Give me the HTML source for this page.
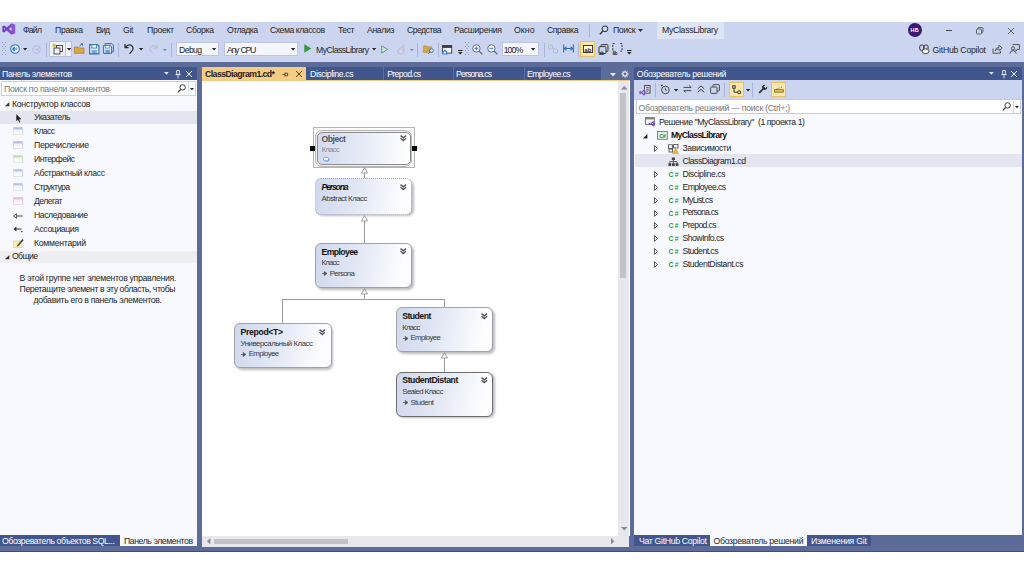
<!DOCTYPE html>
<html lang="ru"><head><meta charset="utf-8"><title>MyClassLibrary - ClassDiagram1.cd</title>
<style>
html,body{margin:0;padding:0;background:#fff;}
body{width:1024px;height:574px;position:relative;overflow:hidden;font-family:"Liberation Sans", sans-serif;}
#app{position:absolute;left:0;top:0;width:1024px;height:574px;}
#app div,#app span,#app svg{position:absolute;}
.t{white-space:pre;display:block;}
svg{overflow:visible;}
</style></head><body><div id="app">
<div style="left:0px;top:22px;width:1024px;height:529.6px;background:#5d6b99;"></div>
<div style="left:0px;top:550.6px;width:1024px;height:1px;background:#3b4d86;"></div>
<div style="left:0px;top:22px;width:1024px;height:39.5px;background:#ccd5f0;"></div>
<div style="left:0px;top:67px;width:197px;height:13px;background:#40568d;"></div>
<div style="left:0px;top:80px;width:197px;height:454.6px;background:#f7f9fe;"></div>
<div style="left:0px;top:534.6px;width:197px;height:11.8px;background:#40568d;"></div>
<div style="left:202px;top:67px;width:399px;height:13px;background:#40568d;"></div>
<div style="left:202px;top:67px;width:104px;height:13px;background:#f5cc84;"></div>
<div style="left:202px;top:79.5px;width:427.5px;height:1.5px;background:#f5cc84;"></div>
<div style="left:202px;top:81px;width:427.5px;height:455px;background:#ffffff;"></div>
<div style="left:634.2px;top:67px;width:387.5px;height:13px;background:#40568d;"></div>
<div style="left:634.2px;top:80px;width:387.5px;height:20px;background:#ccd5f0;"></div>
<div style="left:634.2px;top:100px;width:387.5px;height:434.6px;background:#f7f9fe;"></div>
<div style="left:634.2px;top:534.6px;width:236.5px;height:11.8px;background:#40568d;"></div>
<svg style="left:2px;top:23.4px;" width="13.5" height="12" viewBox="0 0 13.5 12"><defs><linearGradient id="vsg" x1="0" y1="0" x2="1" y2="0"><stop offset="0" stop-color="#6a35b8"/><stop offset="1" stop-color="#9055e0"/></linearGradient></defs><path d="M9.5 0.2 L13.2 1.7 V10.3 L9.5 11.8 L4.6 7.5 L2.1 9.5 L0.4 8.7 V3.3 L2.1 2.5 L4.6 4.5 Z M9.7 3.9 L6.9 6 L9.7 8.1 Z M1.9 4.9 V7.1 L3.2 6 Z" fill="url(#vsg)" fill-rule="evenodd"/></svg>
<span id="t1" class="t" style="left:23px;top:24.94px;font-size:8.7px;line-height:10.7px;color:#262626;letter-spacing:-0.786px;">Файл</span>
<span id="t2" class="t" style="left:55px;top:24.94px;font-size:8.7px;line-height:10.7px;color:#262626;letter-spacing:-0.272px;">Правка</span>
<span id="t3" class="t" style="left:96px;top:24.94px;font-size:8.7px;line-height:10.7px;color:#262626;letter-spacing:-0.859px;">Вид</span>
<span id="t4" class="t" style="left:123px;top:24.94px;font-size:8.7px;line-height:10.7px;color:#262626;letter-spacing:-0.305px;">Git</span>
<span id="t5" class="t" style="left:147px;top:24.94px;font-size:8.7px;line-height:10.7px;color:#262626;letter-spacing:-0.325px;">Проект</span>
<span id="t6" class="t" style="left:186px;top:24.94px;font-size:8.7px;line-height:10.7px;color:#262626;letter-spacing:-0.350px;">Сборка</span>
<span id="t7" class="t" style="left:227px;top:24.94px;font-size:8.7px;line-height:10.7px;color:#262626;letter-spacing:-0.557px;">Отладка</span>
<span id="t8" class="t" style="left:270px;top:24.94px;font-size:8.7px;line-height:10.7px;color:#262626;letter-spacing:-0.467px;">Схема классов</span>
<span id="t9" class="t" style="left:338px;top:24.94px;font-size:8.7px;line-height:10.7px;color:#262626;letter-spacing:-0.495px;">Тест</span>
<span id="t10" class="t" style="left:367px;top:24.94px;font-size:8.7px;line-height:10.7px;color:#262626;letter-spacing:-0.369px;">Анализ</span>
<span id="t11" class="t" style="left:407px;top:24.94px;font-size:8.7px;line-height:10.7px;color:#262626;letter-spacing:-0.571px;">Средства</span>
<span id="t12" class="t" style="left:454px;top:24.94px;font-size:8.7px;line-height:10.7px;color:#262626;letter-spacing:-0.281px;">Расширения</span>
<span id="t13" class="t" style="left:514px;top:24.94px;font-size:8.7px;line-height:10.7px;color:#262626;letter-spacing:0.104px;">Окно</span>
<span id="t14" class="t" style="left:547px;top:24.94px;font-size:8.7px;line-height:10.7px;color:#262626;letter-spacing:-0.432px;">Справка</span>
<div style="left:589px;top:23.5px;width:1px;height:13px;background:#a9b4d8;"></div>
<svg style="left:599px;top:25px;" width="10" height="10" viewBox="0 0 10 10"><circle cx="6" cy="3.8" r="2.9" fill="none" stroke="#333" stroke-width="1"/><path d="M4 6 L0.8 9.2" stroke="#333" stroke-width="1.3" fill="none"/></svg>
<span id="t15" class="t" style="left:613px;top:24.94px;font-size:8.7px;line-height:10.7px;color:#262626;letter-spacing:-0.395px;">Поиск</span>
<svg style="left:638px;top:29px;" width="5" height="3" viewBox="0 0 5 3"><path d="M0 0 H5 L2.5 3 Z" fill="#333"/></svg>
<div style="left:656.5px;top:22px;width:67px;height:16.5px;background:#dde4f6;"></div>
<span id="t16" class="t" style="left:662px;top:24.94px;font-size:8.7px;line-height:10.7px;color:#262626;letter-spacing:-0.297px;">MyClassLibrary</span>
<div style="left:907.5px;top:23px;width:14px;height:14px;background:#3a1a6e;border-radius:50%;"></div>
<span id="t17" class="t" style="left:910.6px;top:26.64px;font-size:5.5px;line-height:7.5px;color:#fff;font-weight:bold;letter-spacing:0.062px;">НБ</span>
<div style="left:945.5px;top:30px;width:6.5px;height:0.8px;background:#444;"></div>
<svg style="left:976px;top:26.5px;" width="8" height="8" viewBox="0 0 8 8"><rect x="0.5" y="2" width="5" height="5" rx="1" fill="none" stroke="#444" stroke-width="0.8"/><path d="M2 2 V1.4 Q2 0.5 2.9 0.5 H6 Q7 0.5 7 1.5 V4.6 Q7 5.5 6 5.5" fill="none" stroke="#444" stroke-width="0.8"/></svg>
<svg style="left:1008px;top:27.5px;" width="6" height="6" viewBox="0 0 6 6"><path d="M0 0 L6 6 M6 0 L0 6" stroke="#444" stroke-width="0.8"/></svg>
<svg style="left:1.5px;top:42.2px;" width="4" height="14" viewBox="0 0 4 14"><rect x="0" y="0" width="1" height="1" fill="#8f9bc4"/><rect x="3" y="0" width="1" height="1" fill="#8f9bc4" opacity="1"/><rect x="1.5" y="2" width="1" height="1" fill="#8f9bc4"/><rect x="1.5" y="2" width="1" height="1" fill="#8f9bc4" opacity="0"/><rect x="0" y="4" width="1" height="1" fill="#8f9bc4"/><rect x="3" y="4" width="1" height="1" fill="#8f9bc4" opacity="1"/><rect x="1.5" y="6" width="1" height="1" fill="#8f9bc4"/><rect x="1.5" y="6" width="1" height="1" fill="#8f9bc4" opacity="0"/><rect x="0" y="8" width="1" height="1" fill="#8f9bc4"/><rect x="3" y="8" width="1" height="1" fill="#8f9bc4" opacity="1"/><rect x="1.5" y="10" width="1" height="1" fill="#8f9bc4"/><rect x="1.5" y="10" width="1" height="1" fill="#8f9bc4" opacity="0"/><rect x="0" y="12" width="1" height="1" fill="#8f9bc4"/><rect x="3" y="12" width="1" height="1" fill="#8f9bc4" opacity="1"/></svg>
<svg style="left:10px;top:44.2px;" width="10" height="10" viewBox="0 0 10 10"><circle cx="5" cy="5" r="4.3" fill="#e9f0fb" stroke="#2e75c8" stroke-width="1.1"/><path d="M7.3 5 H3 M4.8 3 L2.8 5 L4.8 7" fill="none" stroke="#2e75c8" stroke-width="1.1"/></svg>
<svg style="left:23.4px;top:48.400000000000006px;" width="4.2" height="2.6" viewBox="0 0 4.2 2.6"><path d="M0 0 H4.2 L2.1 2.5 Z" fill="#222"/></svg>
<svg style="left:32px;top:44.7px;" width="9" height="9" viewBox="0 0 9 9"><circle cx="4.5" cy="4.5" r="3.8" fill="none" stroke="#b4bcd6" stroke-width="1"/><path d="M2.5 4.5 H6.5 M5 3 L6.5 4.5 L5 6" fill="none" stroke="#b4bcd6" stroke-width="0.9"/></svg>
<div style="left:46px;top:42.5px;width:1px;height:14px;background:#a9b4d8;"></div>
<div style="left:49px;top:41px;width:22.5px;height:15.7px;background:#eef2fb;border:1px solid #b6c0e0;box-sizing:border-box;"></div>
<div style="left:65px;top:41.5px;width:1px;height:14.7px;background:#b6c0e0;"></div>
<svg style="left:52px;top:42.7px;" width="12" height="12" viewBox="0 0 12 12"><rect x="4.5" y="2.5" width="6" height="6" fill="#f4f6fb" stroke="#3c3c3c" stroke-width="0.9"/><rect x="2" y="5" width="6" height="6" fill="#f4f6fb" stroke="#3c3c3c" stroke-width="0.9"/><circle cx="2.2" cy="2.2" r="1.7" fill="#e8b93b"/></svg>
<svg style="left:66.60000000000001px;top:48.400000000000006px;" width="4.2" height="2.6" viewBox="0 0 4.2 2.6"><path d="M0 0 H4.2 L2.1 2.5 Z" fill="#222"/></svg>
<svg style="left:74px;top:43.2px;" width="11" height="11" viewBox="0 0 11 11"><path d="M0.5 4 H4 L5 5 H10 V10.3 H0.5 Z" fill="#d9a848" stroke="#a97a24" stroke-width="0.7"/><path d="M5.5 3 L8.5 0.8 M8.5 0.8 V2.6 M8.5 0.8 H6.8" stroke="#2e6fc0" stroke-width="1" fill="none"/></svg>
<svg style="left:89px;top:43.7px;" width="10.5" height="10.5" viewBox="0 0 10.5 10.5"><path d="M0.6 0.6 H8.4 L9.9 2.1 V9.9 H0.6 Z" fill="#d6e6f8" stroke="#2f6fb8" stroke-width="1.1"/><rect x="2.8" y="0.8" width="4.6" height="3.2" fill="#fff" stroke="#2f6fb8" stroke-width="0.8"/><rect x="2.6" y="6.2" width="5.2" height="3.6" fill="#2f6fb8" opacity="0.55"/></svg>
<svg style="left:103px;top:43.2px;" width="11" height="11" viewBox="0 0 11 11"><path d="M2.2 0.6 H9 L10.4 2 V8.8 H2.2 Z" fill="#c3d8f1" stroke="#2f6fb8" stroke-width="1"/><path d="M0.6 2.4 H7.2 L8.6 3.8 V10.4 H0.6 Z" fill="#d6e6f8" stroke="#2f6fb8" stroke-width="1"/><rect x="2.4" y="6.8" width="4.4" height="3.4" fill="#2f6fb8" opacity="0.6"/><rect x="2.6" y="2.6" width="3.6" height="2.4" fill="#fff" stroke="#2f6fb8" stroke-width="0.6"/></svg>
<div style="left:118px;top:42.5px;width:1px;height:14px;background:#a9b4d8;"></div>
<svg style="left:123.5px;top:42.7px;" width="11" height="12" viewBox="0 0 11 12"><path d="M1 1 V4.6 H4.6" fill="none" stroke="#2a2a2a" stroke-width="1.2"/><path d="M1.4 4.3 Q4 0.6 7.4 2.4 Q10.4 4.6 8 8 L5.6 10.8" fill="none" stroke="#2a2a2a" stroke-width="1.2"/></svg>
<svg style="left:138.9px;top:48.400000000000006px;" width="4.2" height="2.6" viewBox="0 0 4.2 2.6"><path d="M0 0 H4.2 L2.1 2.5 Z" fill="#222"/></svg>
<svg style="left:148px;top:43.7px;" width="10" height="10" viewBox="0 0 10 10"><path d="M9 0.8 V4 H5.8" fill="none" stroke="#b4bcd6" stroke-width="1"/><path d="M8.7 3.8 Q6.4 0.8 3.6 2.2 Q1 4 2.8 7 L4.6 9.2" fill="none" stroke="#b4bcd6" stroke-width="1"/></svg>
<svg style="left:163.2px;top:49.0px;" width="3.8" height="2.4" viewBox="0 0 3.8 2.4"><path d="M0 0 H3.8 L1.9 2.3 Z" fill="#7a8098"/></svg>
<div style="left:171px;top:42.5px;width:1px;height:14px;background:#a9b4d8;"></div>
<div style="left:175.8px;top:42.2px;width:43.5px;height:14px;background:#f4f6fc;border:1px solid #bcc5e2;box-sizing:border-box;"></div>
<span id="t18" class="t" style="left:179.10000000000002px;top:44.94px;font-size:8.7px;line-height:10.7px;color:#262626;letter-spacing:-0.652px;">Debug</span>
<svg style="left:211.70000000000002px;top:48.400000000000006px;" width="4.2" height="2.6" viewBox="0 0 4.2 2.6"><path d="M0 0 H4.2 L2.1 2.5 Z" fill="#222"/></svg>
<div style="left:223.6px;top:42.2px;width:74.5px;height:14px;background:#f4f6fc;border:1px solid #bcc5e2;box-sizing:border-box;"></div>
<span id="t19" class="t" style="left:226.9px;top:44.94px;font-size:8.7px;line-height:10.7px;color:#262626;letter-spacing:-1.240px;word-spacing:1.2px;">Any CPU</span>
<svg style="left:290.5px;top:48.400000000000006px;" width="4.2" height="2.6" viewBox="0 0 4.2 2.6"><path d="M0 0 H4.2 L2.1 2.5 Z" fill="#222"/></svg>
<svg style="left:304px;top:44.2px;" width="8" height="9" viewBox="0 0 8 9"><path d="M0.3 0.3 L7.3 4.5 L0.3 8.7 Z" fill="#2e9a3c"/></svg>
<span id="t20" class="t" style="left:316px;top:44.94px;font-size:8.7px;line-height:10.7px;color:#262626;letter-spacing:-0.528px;">MyClassLibrary</span>
<svg style="left:372.4px;top:48.400000000000006px;" width="4.2" height="2.6" viewBox="0 0 4.2 2.6"><path d="M0 0 H4.2 L2.1 2.5 Z" fill="#222"/></svg>
<svg style="left:381.2px;top:44.6px;" width="8" height="9" viewBox="0 0 8 9"><path d="M0.7 0.8 L6.6 4.4 L0.7 8 Z" fill="#d4e2e8" stroke="#4c9a5c" stroke-width="0.9"/></svg>
<svg style="left:396px;top:43.800000000000004px;" width="10" height="11" viewBox="0 0 10 11"><path d="M6.6 0.3 C7.4 2.2 6.4 3.2 5.6 4 C5.2 3.2 4.6 2.8 4.6 2.8 C4.4 4 1.6 5 1.6 7.4 C1.6 9.2 3.2 10.4 5 10.4 C6.8 10.4 8.4 9.2 8.4 7.2 C8.4 5.8 7.8 5.2 7.8 5.2 C8.8 3.4 7.8 1.4 6.6 0.3 Z" fill="#c4c9d9" stroke="#b3b9cd" stroke-width="0.5"/><path d="M5 9.2 C3.8 9.2 3.2 8.2 3.4 7.2 C3.6 6.2 4.6 5.8 5 5 C5.8 6 6.6 6.8 6.4 7.8 C6.2 8.8 5.6 9.2 5 9.2 Z" fill="#d6daea"/></svg>
<svg style="left:409.6px;top:49.0px;" width="3.8" height="2.4" viewBox="0 0 3.8 2.4"><path d="M0 0 H3.8 L1.9 2.3 Z" fill="#7a8098"/></svg>
<div style="left:417px;top:42.5px;width:1px;height:14px;background:#a9b4d8;"></div>
<svg style="left:422.6px;top:45.2px;" width="11" height="10" viewBox="0 0 11 10"><path d="M0.4 0.8 H3.6 L4.6 1.8 H8.6 V7.4 H0.4 Z" fill="#cfa54e" stroke="#b08a34" stroke-width="0.5"/><circle cx="8.4" cy="5.6" r="1.9" fill="#e4ecfa" stroke="#2e6fc0" stroke-width="0.9"/><path d="M7 7 L5.2 8.9" stroke="#2e6fc0" stroke-width="1"/></svg>
<div style="left:437.5px;top:42.5px;width:1px;height:14px;background:#a9b4d8;"></div>
<svg style="left:442.3px;top:45.2px;" width="10.5" height="10" viewBox="0 0 10.5 10"><rect x="0.5" y="0.5" width="9.2" height="7.6" fill="#f2f4fb" stroke="#3a3a3a" stroke-width="0.9"/><rect x="0.5" y="0.5" width="9.2" height="2.4" fill="#3a3a3a"/><path d="M0.2 7 L2.8 4.6 L5.4 7 V9.4 H0.2 Z" fill="#3f84d4"/><path d="M1.6 7.2 L2.8 6.2 L4 7.2 V8.4 H1.6 Z" fill="#eaf2fc"/></svg>
<svg style="left:458px;top:50.2px;" width="4.6" height="4.6" viewBox="0 0 4.6 4.6"><path d="M0 0 H4.6 V1 H0 Z M0 2.1 H4.6 L2.3 4.5 Z" fill="#2a2a2a"/></svg>
<svg style="left:464.5px;top:42.2px;" width="4" height="14" viewBox="0 0 4 14"><rect x="0" y="0" width="1" height="1" fill="#8f9bc4"/><rect x="3" y="0" width="1" height="1" fill="#8f9bc4" opacity="1"/><rect x="1.5" y="2" width="1" height="1" fill="#8f9bc4"/><rect x="1.5" y="2" width="1" height="1" fill="#8f9bc4" opacity="0"/><rect x="0" y="4" width="1" height="1" fill="#8f9bc4"/><rect x="3" y="4" width="1" height="1" fill="#8f9bc4" opacity="1"/><rect x="1.5" y="6" width="1" height="1" fill="#8f9bc4"/><rect x="1.5" y="6" width="1" height="1" fill="#8f9bc4" opacity="0"/><rect x="0" y="8" width="1" height="1" fill="#8f9bc4"/><rect x="3" y="8" width="1" height="1" fill="#8f9bc4" opacity="1"/><rect x="1.5" y="10" width="1" height="1" fill="#8f9bc4"/><rect x="1.5" y="10" width="1" height="1" fill="#8f9bc4" opacity="0"/><rect x="0" y="12" width="1" height="1" fill="#8f9bc4"/><rect x="3" y="12" width="1" height="1" fill="#8f9bc4" opacity="1"/></svg>
<svg style="left:472px;top:43.7px;" width="11" height="11" viewBox="0 0 11 11"><circle cx="4.4" cy="4.4" r="3.7" fill="#eef2fb" stroke="#5a5f73" stroke-width="0.9"/><path d="M7.2 7.2 L10.4 10.4" stroke="#5a5f73" stroke-width="1.2"/><path d="M2.6 4.4 H6.2 M4.4 2.6 V6.2" stroke="#2e6fc0" stroke-width="0.9"/></svg>
<svg style="left:486.5px;top:43.7px;" width="11" height="11" viewBox="0 0 11 11"><circle cx="4.4" cy="4.4" r="3.7" fill="#eef2fb" stroke="#5a5f73" stroke-width="0.9"/><path d="M7.2 7.2 L10.4 10.4" stroke="#5a5f73" stroke-width="1.2"/><path d="M2.6 4.4 H6.2" stroke="#2e6fc0" stroke-width="0.9"/></svg>
<div style="left:501.5px;top:42.2px;width:37px;height:14px;background:#f4f6fc;border:1px solid #bcc5e2;box-sizing:border-box;"></div>
<span id="t21" class="t" style="left:503.7px;top:44.94px;font-size:8.7px;line-height:10.7px;color:#262626;letter-spacing:-0.911px;">100%</span>
<svg style="left:530.9px;top:48.400000000000006px;" width="4.2" height="2.6" viewBox="0 0 4.2 2.6"><path d="M0 0 H4.2 L2.1 2.5 Z" fill="#222"/></svg>
<div style="left:543.5px;top:42.5px;width:1px;height:14px;background:#a9b4d8;"></div>
<svg style="left:548px;top:44.2px;" width="10" height="10" viewBox="0 0 10 10"><rect x="0.5" y="1" width="4" height="4" rx="1" fill="none" stroke="#b4bcd6" stroke-width="1"/><rect x="5.5" y="5" width="4" height="4" rx="1" fill="none" stroke="#b4bcd6" stroke-width="1"/><path d="M4.5 3 L6 5" stroke="#b4bcd6" stroke-width="1"/></svg>
<svg style="left:562.5px;top:44.2px;" width="11" height="9" viewBox="0 0 11 9"><path d="M0.6 0.5 V8.5 M10.4 0.5 V8.5 M1.5 4.5 H9.5 M3.4 2.6 L1.5 4.5 L3.4 6.4 M7.6 2.6 L9.5 4.5 L7.6 6.4" fill="none" stroke="#2e6fc0" stroke-width="1.1"/></svg>
<div style="left:577.5px;top:42.5px;width:1px;height:14px;background:#a9b4d8;"></div>
<div style="left:580.3px;top:41.3px;width:15px;height:15.7px;background:#fbe7ae;border:1px solid #e5c365;box-sizing:border-box;"></div>
<svg style="left:583px;top:44.7px;" width="10" height="8" viewBox="0 0 10 8"><rect x="0.5" y="0.5" width="9" height="7" fill="#fdf4d6" stroke="#3a3a3a" stroke-width="1"/></svg>
<span id="t22" class="t" style="left:584.6px;top:46.64px;font-size:5.5px;line-height:7.5px;color:#222;font-weight:bold;letter-spacing:0.078px;">ab</span>
<svg style="left:598px;top:43.7px;" width="11" height="11" viewBox="0 0 11 11"><rect x="3" y="0.6" width="7" height="7" rx="1" fill="none" stroke="#3a3a3a" stroke-width="1"/><rect x="1" y="2.6" width="7" height="7" rx="1" fill="#ccd5f0" stroke="#3a3a3a" stroke-width="1"/></svg>
<span id="t23" class="t" style="left:599px;top:51.49px;font-size:4.5px;line-height:6.5px;color:#222;font-weight:bold;letter-spacing:-0.266px;">ab</span>
<svg style="left:611.5px;top:43.2px;" width="11" height="9" viewBox="0 0 11 9"><path d="M2.6 0.5 H0.8 V8.2 H2.6 M8.2 0.5 H10 V8.2 H8.2" fill="none" stroke="#3a3a3a" stroke-width="1" stroke-dasharray="2.2 1"/></svg>
<span id="t24" class="t" style="left:612.6px;top:51.49px;font-size:4.5px;line-height:6.5px;color:#222;font-weight:bold;letter-spacing:-0.266px;">ab</span>
<svg style="left:627px;top:50.2px;" width="4.6" height="4.6" viewBox="0 0 4.6 4.6"><path d="M0 0 H4.6 V1 H0 Z M0 2.1 H4.6 L2.3 4.5 Z" fill="#2a2a2a"/></svg>
<svg style="left:918.5px;top:43.7px;" width="11" height="10" viewBox="0 0 11 10"><rect x="0.7" y="1" width="4.2" height="5.4" rx="1.8" fill="none" stroke="#333" stroke-width="1"/><rect x="4.9" y="1" width="4.2" height="5.4" rx="1.8" fill="none" stroke="#333" stroke-width="1"/><ellipse cx="6.6" cy="7.2" rx="3.4" ry="2.4" fill="#fff" stroke="#333" stroke-width="0.9"/></svg>
<span id="t25" class="t" style="left:932.5px;top:44.94px;font-size:8.7px;line-height:10.7px;color:#262626;letter-spacing:-0.231px;">GitHub Copilot</span>
<svg style="left:992px;top:43.7px;" width="11" height="10" viewBox="0 0 11 10"><path d="M1 4.6 V9.2 H8.4 V6.8" fill="none" stroke="#444" stroke-width="0.9"/><path d="M3 7 Q3.6 3.4 7 3.2 V1.2 L10.2 4 L7 6.6 V4.8 Q4.6 4.8 3 7 Z" fill="none" stroke="#444" stroke-width="0.8"/></svg>
<svg style="left:1008.5px;top:43.7px;" width="11" height="10" viewBox="0 0 11 10"><path d="M3.6 0.6 H10.4 V5.4 H8.4 L7 7 V5.4" fill="none" stroke="#444" stroke-width="0.9"/><circle cx="4" cy="4.4" r="1.6" fill="none" stroke="#444" stroke-width="0.9"/><path d="M0.8 9.6 Q1.2 6.6 4 6.6 Q6.8 6.6 7.2 9.6" fill="none" stroke="#444" stroke-width="0.9"/></svg>
<span id="t26" class="t" style="left:2px;top:68.94px;font-size:8.7px;line-height:10.7px;color:#fff;letter-spacing:-0.367px;">Панель элементов</span>
<svg style="left:163.9px;top:72.4px;" width="4.8" height="2.8" viewBox="0 0 4.8 2.8"><path d="M0 0 H4.8 L2.4 2.7 Z" fill="#dfe4f3"/></svg>
<svg style="left:175.0px;top:70px;" width="6" height="9" viewBox="0 0 6 9"><path d="M1.6 0.5 H4.4 V4.4 H1.6 Z M0.4 4.6 H5.6 M3 4.6 V8.4" fill="none" stroke="#e6eaf6" stroke-width="0.9"/></svg>
<svg style="left:185.5px;top:71px;" width="6" height="6" viewBox="0 0 6 6"><path d="M0 0 L6 6 M6 0 L0 6" stroke="#e6eaf6" stroke-width="1"/></svg>
<div style="left:1px;top:81px;width:195px;height:14.6px;background:#fff;border:1px solid #c9d0e8;box-sizing:border-box;"></div>
<span id="t27" class="t" style="left:4px;top:83.94px;font-size:8.7px;line-height:10.7px;color:#767676;letter-spacing:-0.281px;">Поиск по панели элементов</span>
<svg style="left:176.5px;top:83.6px;" width="9" height="9" viewBox="0 0 9 9"><circle cx="5.6" cy="3.4" r="2.7" fill="none" stroke="#3a3a3a" stroke-width="1"/><path d="M3.8 5.4 L0.8 8.4" stroke="#3a3a3a" stroke-width="1.3"/></svg>
<div style="left:187.5px;top:82px;width:1px;height:12.6px;background:#d5daec;"></div>
<svg style="left:190px;top:87.6px;" width="4" height="2.4" viewBox="0 0 4 2.4"><path d="M0 0 H4 L2 2.3 Z" fill="#222"/></svg>
<svg style="left:4.5px;top:101.8px;" width="4.3" height="4.3" viewBox="0 0 4.3 4.3"><path d="M4.3 0 V4.3 H0 Z" fill="#333"/></svg>
<span id="t28" class="t" style="left:12px;top:98.94px;font-size:8.7px;line-height:10.7px;color:#262626;letter-spacing:-0.305px;">Конструктор классов</span>
<div style="left:0px;top:110.5px;width:196.5px;height:13.3px;background:#e3e6f1;"></div>
<span id="t29" class="t" style="left:34px;top:111.94px;font-size:8.7px;line-height:10.7px;color:#262626;letter-spacing:-0.500px;">Указатель</span>
<svg style="left:15.5px;top:114.1px;" width="6" height="9" viewBox="0 0 6 9"><path d="M0.3 0.3 V7.2 L2 5.6 L3.2 8.4 L4.3 7.9 L3.1 5.2 H5.4 Z" fill="#1e1e1e"/></svg>
<span id="t30" class="t" style="left:34px;top:125.94px;font-size:8.7px;line-height:10.7px;color:#262626;letter-spacing:-0.664px;">Класс</span>
<svg style="left:13px;top:127.41999999999999px;" width="10" height="8" viewBox="0 0 10 8"><defs><linearGradient id="g132" x1="0" y1="0" x2="0" y2="1"><stop offset="0" stop-color="#7f9fe0"/><stop offset="0.45" stop-color="#f4f6fd"/><stop offset="1" stop-color="#ffffff"/></linearGradient></defs><rect x="0.3" y="0.3" width="9.2" height="7" fill="url(#g132)" stroke="#cfd6ea" stroke-width="0.6"/><path d="M9.8 1 V7.6" stroke="#c8ccd8" stroke-width="0.6"/></svg>
<span id="t31" class="t" style="left:34px;top:139.94px;font-size:8.7px;line-height:10.7px;color:#262626;letter-spacing:-0.324px;">Перечисление</span>
<svg style="left:13px;top:141.34px;" width="10" height="8" viewBox="0 0 10 8"><defs><linearGradient id="g145" x1="0" y1="0" x2="0" y2="1"><stop offset="0" stop-color="#9f98dc"/><stop offset="0.45" stop-color="#efeefb"/><stop offset="1" stop-color="#ffffff"/></linearGradient></defs><rect x="0.3" y="0.3" width="9.2" height="7" fill="url(#g145)" stroke="#cfcbea" stroke-width="0.6"/><path d="M9.8 1 V7.6" stroke="#c8ccd8" stroke-width="0.6"/></svg>
<span id="t32" class="t" style="left:34px;top:153.94px;font-size:8.7px;line-height:10.7px;color:#262626;letter-spacing:-0.596px;">Интерфейс</span>
<svg style="left:13px;top:155.26px;" width="10" height="8" viewBox="0 0 10 8"><defs><linearGradient id="g159" x1="0" y1="0" x2="0" y2="1"><stop offset="0" stop-color="#a9cf8c"/><stop offset="0.45" stop-color="#f1f7ec"/><stop offset="1" stop-color="#ffffff"/></linearGradient></defs><rect x="0.3" y="0.3" width="9.2" height="7" fill="url(#g159)" stroke="#d2e2c6" stroke-width="0.6"/><path d="M9.8 1 V7.6" stroke="#c8ccd8" stroke-width="0.6"/></svg>
<span id="t33" class="t" style="left:34px;top:167.94px;font-size:8.7px;line-height:10.7px;color:#262626;letter-spacing:-0.396px;">Абстрактный класс</span>
<svg style="left:13px;top:169.18px;" width="10" height="8" viewBox="0 0 10 8"><defs><linearGradient id="g173" x1="0" y1="0" x2="0" y2="1"><stop offset="0" stop-color="#8aa6e2"/><stop offset="0.45" stop-color="#f4f6fd"/><stop offset="1" stop-color="#ffffff"/></linearGradient></defs><rect x="0.3" y="0.3" width="9.2" height="7" fill="url(#g173)" stroke="#cfd6ea" stroke-width="0.6"/><path d="M9.8 1 V7.6" stroke="#c8ccd8" stroke-width="0.6"/></svg>
<span id="t34" class="t" style="left:34px;top:181.94px;font-size:8.7px;line-height:10.7px;color:#262626;letter-spacing:-0.652px;">Структура</span>
<svg style="left:13px;top:183.1px;" width="10" height="8" viewBox="0 0 10 8"><defs><linearGradient id="g187" x1="0" y1="0" x2="0" y2="1"><stop offset="0" stop-color="#8aa6e2"/><stop offset="0.45" stop-color="#f4f6fd"/><stop offset="1" stop-color="#ffffff"/></linearGradient></defs><rect x="0.3" y="0.3" width="9.2" height="7" fill="url(#g187)" stroke="#cfd6ea" stroke-width="0.6"/><path d="M9.8 1 V7.6" stroke="#c8ccd8" stroke-width="0.6"/></svg>
<span id="t35" class="t" style="left:34px;top:195.94px;font-size:8.7px;line-height:10.7px;color:#262626;letter-spacing:-0.556px;">Делегат</span>
<svg style="left:13px;top:197.02px;" width="10" height="8" viewBox="0 0 10 8"><defs><linearGradient id="g201" x1="0" y1="0" x2="0" y2="1"><stop offset="0" stop-color="#e3a3c2"/><stop offset="0.45" stop-color="#fbeff5"/><stop offset="1" stop-color="#ffffff"/></linearGradient></defs><rect x="0.3" y="0.3" width="9.2" height="7" fill="url(#g201)" stroke="#e8c6d6" stroke-width="0.6"/><path d="M9.8 1 V7.6" stroke="#c8ccd8" stroke-width="0.6"/></svg>
<span id="t36" class="t" style="left:34px;top:209.94px;font-size:8.7px;line-height:10.7px;color:#262626;letter-spacing:-0.445px;">Наследование</span>
<svg style="left:13px;top:212.54px;" width="10" height="6" viewBox="0 0 10 6"><path d="M3.6 0.6 L0.7 3 L3.6 5.4 Z" fill="#fff" stroke="#333" stroke-width="0.8"/><path d="M3.6 3 H9.6" stroke="#333" stroke-width="0.9"/></svg>
<span id="t37" class="t" style="left:34px;top:223.94px;font-size:8.7px;line-height:10.7px;color:#262626;letter-spacing:-0.401px;">Ассоциация</span>
<svg style="left:13px;top:226.45999999999998px;" width="10" height="7" viewBox="0 0 10 7"><path d="M3.4 0.6 L0.7 3 L3.4 5.4 Z" fill="#222"/><path d="M3 3 H8.6" stroke="#222" stroke-width="0.9"/><rect x="8.2" y="5" width="1.2" height="1.2" fill="#222"/></svg>
<span id="t38" class="t" style="left:34px;top:237.94px;font-size:8.7px;line-height:10.7px;color:#262626;letter-spacing:-0.272px;">Комментарий</span>
<svg style="left:12.5px;top:238.38px;" width="11" height="10" viewBox="0 0 11 10"><path d="M0.5 3 H8.8 V9.4 H0.5 Z" fill="#faf1b4" stroke="#d6c46a" stroke-width="0.6"/><path d="M4.2 7.2 L9.4 1 L10.6 2 L5.4 8 L3.8 8.6 Z" fill="#3a3a3a"/></svg>
<div style="left:0px;top:250.99999999999994px;width:196.5px;height:12px;background:#efeff2;"></div>
<svg style="left:4.5px;top:254.79999999999995px;" width="4.3" height="4.3" viewBox="0 0 4.3 4.3"><path d="M4.3 0 V4.3 H0 Z" fill="#333"/></svg>
<span id="t39" class="t" style="left:12px;top:250.94px;font-size:8.7px;line-height:10.7px;color:#262626;letter-spacing:-0.645px;">Общие</span>
<span id="t40" class="t" style="left:19.6px;top:272.94px;font-size:8.7px;line-height:10.7px;color:#262626;letter-spacing:-0.307px;">В этой группе нет элементов управления.</span>
<span id="t41" class="t" style="left:19.6px;top:283.94px;font-size:8.7px;line-height:10.7px;color:#262626;letter-spacing:-0.421px;">Перетащите элемент в эту область, чтобы</span>
<span id="t42" class="t" style="left:33.4px;top:294.94px;font-size:8.7px;line-height:10.7px;color:#262626;letter-spacing:-0.315px;">добавить его в панель элементов.</span>
<span id="t43" class="t" style="left:2px;top:535.94px;font-size:8.7px;line-height:10.7px;color:#fff;letter-spacing:-0.398px;">Обозреватель объектов SQL...</span>
<div style="left:120px;top:534.6px;width:77px;height:11.8px;background:#f7f9fe;"></div>
<span id="t44" class="t" style="left:124px;top:535.94px;font-size:8.7px;line-height:10.7px;color:#262626;letter-spacing:-0.433px;">Панель элементов</span>
<span id="t45" class="t" style="left:205px;top:68.94px;font-size:8.7px;line-height:10.7px;color:#1e1e1e;font-weight:bold;letter-spacing:-0.545px;">ClassDiagram1.cd*</span>
<svg style="left:282px;top:71.5px;" width="7" height="5" viewBox="0 0 7 5"><path d="M0.4 2.5 H3 M3 0.6 V4.4 M3 1.2 H5.6 V3.8 H3" fill="none" stroke="#4a3a1a" stroke-width="0.8"/></svg>
<svg style="left:295.5px;top:70.5px;" width="6" height="6" viewBox="0 0 6 6"><path d="M0 0 L6 6 M6 0 L0 6" stroke="#4a3a1a" stroke-width="0.9"/></svg>
<span id="t46" class="t" style="left:310px;top:68.94px;font-size:8.7px;line-height:10.7px;color:#fff;letter-spacing:-0.398px;">Discipline.cs</span>
<span id="t47" class="t" style="left:387.2px;top:68.94px;font-size:8.7px;line-height:10.7px;color:#fff;letter-spacing:-0.641px;">Prepod.cs</span>
<span id="t48" class="t" style="left:456px;top:68.94px;font-size:8.7px;line-height:10.7px;color:#fff;letter-spacing:-0.830px;">Persona.cs</span>
<span id="t49" class="t" style="left:527px;top:68.94px;font-size:8.7px;line-height:10.7px;color:#fff;letter-spacing:-0.623px;">Employee.cs</span>
<div style="left:383.4px;top:67px;width:1px;height:12.5px;background:#5a6ea3;"></div>
<div style="left:452.7px;top:67px;width:1px;height:12.5px;background:#5a6ea3;"></div>
<div style="left:523.6px;top:67px;width:1px;height:12.5px;background:#5a6ea3;"></div>
<svg style="left:609.5px;top:72.5px;" width="6" height="3.5" viewBox="0 0 6 3.5"><path d="M0 0 H6 L3 3.4 Z" fill="#e6eaf6"/></svg>
<svg style="left:621px;top:69.5px;" width="8" height="8" viewBox="0 0 8 8"><circle cx="4" cy="4" r="2.1" fill="none" stroke="#e6eaf6" stroke-width="1.3"/><path d="M4 0.4 V1.6 M4 6.4 V7.6 M0.4 4 H1.6 M6.4 4 H7.6 M1.5 1.5 L2.3 2.3 M5.7 5.7 L6.5 6.5 M6.5 1.5 L5.7 2.3 M2.3 5.7 L1.5 6.5" stroke="#e6eaf6" stroke-width="1"/></svg>
<div style="left:618.2px;top:81px;width:11.3px;height:453.6px;background:#e8e8ec;"></div>
<svg style="left:620.5px;top:85.5px;" width="6.5" height="3.5" viewBox="0 0 6.5 3.5"><path d="M0 3.4 L3.25 0 L6.5 3.4 Z" fill="#868999"/></svg>
<div style="left:620.4px;top:93px;width:5.8px;height:184.5px;background:#c2c3c9;"></div>
<svg style="left:620.5px;top:527px;" width="6.5" height="3.5" viewBox="0 0 6.5 3.5"><path d="M0 0 L3.25 3.4 L6.5 0 Z" fill="#868999"/></svg>
<div style="left:202px;top:535.8px;width:416.2px;height:10.8px;background:#e8e8ec;"></div>
<div style="left:618.2px;top:534.6px;width:11.3px;height:12px;background:#e8e8ec;"></div>
<svg style="left:206.6px;top:538.2px;" width="3.5" height="6" viewBox="0 0 3.5 6"><path d="M3.4 0 L0 3.25 L3.4 6.5 Z" fill="#868999"/></svg>
<svg style="left:610.8px;top:538.2px;" width="3.5" height="6" viewBox="0 0 3.5 6"><path d="M0 0 L3.4 3.25 L0 6.5 Z" fill="#868999"/></svg>
<div style="left:213.5px;top:538.6px;width:134px;height:5.2px;background:#c2c3c9;"></div>
<div style="left:313.3px;top:127.3px;width:101.3px;height:40.3px;border:1px solid #b4b4b4;box-sizing:border-box;background:#fbfbfb;"></div>
<div style="left:315.3px;top:130px;width:97px;height:37px;border:1.6px solid #b6b6b6;border-radius:7px;box-sizing:border-box;background:#f0f0f0;"></div>
<div style="left:317.2px;top:131.6px;width:93.4px;height:33.6px;background:linear-gradient(90deg,#d2dbee 0%,#e6ebf6 50%,#ffffff 100%);border:1px solid #8d8d8d;border-radius:5px;box-sizing:border-box;"></div>
<div style="left:310.3px;top:145.6px;width:5px;height:5px;background:#000;"></div>
<div style="left:412.3px;top:145.6px;width:5px;height:5px;background:#000;"></div>
<span id="t50" class="t" style="left:321.6px;top:133.94px;font-size:8.7px;line-height:10.7px;color:#555;font-weight:bold;letter-spacing:-0.529px;">Object</span>
<span id="t51" class="t" style="left:321.6px;top:144.70px;font-size:7.8px;line-height:9.8px;color:#8e8e8e;letter-spacing:-0.809px;">Класс</span>
<svg style="left:323px;top:157.3px;" width="6.8" height="4.8" viewBox="0 0 6.8 4.8"><rect x="1" y="1" width="5.6" height="3.6" rx="1.8" fill="#7f9fe0"/><rect x="0.4" y="0.4" width="5.4" height="3.4" rx="1.7" fill="#f4f8ff" stroke="#6a8ad6" stroke-width="0.7"/></svg>
<svg style="left:400.3px;top:135.2px;" width="6.5" height="6" viewBox="0 0 6.5 6"><path d="M0.5 0.6 L3.25 2.8 L6 0.6 M0.5 3.3 L3.25 5.5 L6 3.3" fill="none" stroke="#5a5a5a" stroke-width="1.4"/></svg>
<svg style="left:360.5px;top:166.8px;" width="7" height="6.5" viewBox="0 0 7 6.5"><path d="M3.5 0.5 L6.5 6 H0.5 Z" fill="#fff" stroke="#8a8a8a" stroke-width="0.8"/></svg>
<div style="left:363.5px;top:172.8px;width:1px;height:5.599999999999994px;background:#9a9a9a;"></div>
<div style="left:316.90000000000003px;top:179.9px;width:97.2px;height:36.6px;background:#bcbcbc;border-radius:6px;filter:blur(0.9px);"></div>
<div style="left:315.3px;top:178.1px;width:97.2px;height:36.6px;background:linear-gradient(100deg,#cfd8ee 0%,#e3e8f5 45%,#fdfdff 88%);border:1px dotted #a2a2a2;border-radius:6px;box-sizing:border-box;"></div>
<span id="t52" class="t" style="left:321.6px;top:181.94px;font-size:8.7px;line-height:10.7px;color:#111;font-weight:bold;font-style:italic;letter-spacing:-1.216px;">Persona</span>
<span id="t53" class="t" style="left:321.6px;top:193.70px;font-size:7.8px;line-height:9.8px;color:#3a3a3a;letter-spacing:-0.477px;">Abstract Класс</span>
<svg style="left:400.2px;top:183.5px;" width="6.5" height="6" viewBox="0 0 6.5 6"><path d="M0.5 0.6 L3.25 2.8 L6 0.6 M0.5 3.3 L3.25 5.5 L6 3.3" fill="none" stroke="#555" stroke-width="1.45"/></svg>
<svg style="left:360.5px;top:214.8px;" width="7" height="6.5" viewBox="0 0 7 6.5"><path d="M3.5 0.5 L6.5 6 H0.5 Z" fill="#fff" stroke="#8a8a8a" stroke-width="0.8"/></svg>
<div style="left:363.5px;top:220.8px;width:1px;height:21.899999999999977px;background:#9a9a9a;"></div>
<div style="left:316.90000000000003px;top:244.70000000000002px;width:97.2px;height:45px;background:#bcbcbc;border-radius:6px;filter:blur(0.9px);"></div>
<div style="left:315.3px;top:242.9px;width:97.2px;height:45px;background:linear-gradient(100deg,#cfd8ee 0%,#e3e8f5 45%,#fdfdff 88%);border:1px solid #a2a2a2;border-radius:6px;box-sizing:border-box;"></div>
<span id="t54" class="t" style="left:321.6px;top:246.94px;font-size:8.7px;line-height:10.7px;color:#111;font-weight:bold;letter-spacing:-0.635px;">Employee</span>
<span id="t55" class="t" style="left:321.6px;top:257.70px;font-size:7.8px;line-height:9.8px;color:#3a3a3a;letter-spacing:-0.809px;">Класс</span>
<svg style="left:321.8px;top:271.1px;" width="5.5" height="5" viewBox="0 0 5.5 5"><path d="M0 2.5 H2.6 M2.2 0.5 L5 2.5 L2.2 4.5 Z" fill="#555" stroke="#555" stroke-width="0.7"/></svg>
<span id="t56" class="t" style="left:329.7px;top:268.70px;font-size:7.8px;line-height:9.8px;color:#3a3a3a;letter-spacing:-0.641px;">Persona</span>
<svg style="left:400.2px;top:248.3px;" width="6.5" height="6" viewBox="0 0 6.5 6"><path d="M0.5 0.6 L3.25 2.8 L6 0.6 M0.5 3.3 L3.25 5.5 L6 3.3" fill="none" stroke="#555" stroke-width="1.45"/></svg>
<svg style="left:360.5px;top:287.9px;" width="7" height="6.5" viewBox="0 0 7 6.5"><path d="M3.5 0.5 L6.5 6 H0.5 Z" fill="#fff" stroke="#8a8a8a" stroke-width="0.8"/></svg>
<div style="left:363.5px;top:293.9px;width:1px;height:5.7000000000000455px;background:#9a9a9a;"></div>
<div style="left:282.2px;top:299px;width:162.9px;height:1px;background:#9a9a9a;"></div>
<div style="left:282.2px;top:299px;width:1px;height:24.5px;background:#9a9a9a;"></div>
<div style="left:444.1px;top:299px;width:1px;height:9px;background:#9a9a9a;"></div>
<div style="left:235.9px;top:325.1px;width:97.3px;height:44.9px;background:#bcbcbc;border-radius:6px;filter:blur(0.9px);"></div>
<div style="left:234.3px;top:323.3px;width:97.3px;height:44.9px;background:linear-gradient(100deg,#cfd8ee 0%,#e3e8f5 45%,#fdfdff 88%);border:1px solid #a2a2a2;border-radius:6px;box-sizing:border-box;"></div>
<span id="t57" class="t" style="left:240.60000000000002px;top:326.94px;font-size:8.7px;line-height:10.7px;color:#111;font-weight:bold;letter-spacing:-0.361px;">Prepod&lt;T&gt;</span>
<span id="t58" class="t" style="left:240.60000000000002px;top:338.70px;font-size:7.8px;line-height:9.8px;color:#3a3a3a;letter-spacing:-0.456px;">Универсальный Класс</span>
<svg style="left:240.8px;top:351.5px;" width="5.5" height="5" viewBox="0 0 5.5 5"><path d="M0 2.5 H2.6 M2.2 0.5 L5 2.5 L2.2 4.5 Z" fill="#555" stroke="#555" stroke-width="0.7"/></svg>
<span id="t59" class="t" style="left:248.70000000000002px;top:348.70px;font-size:7.8px;line-height:9.8px;color:#3a3a3a;letter-spacing:-0.596px;">Employee</span>
<svg style="left:319.3px;top:328.7px;" width="6.5" height="6" viewBox="0 0 6.5 6"><path d="M0.5 0.6 L3.25 2.8 L6 0.6 M0.5 3.3 L3.25 5.5 L6 3.3" fill="none" stroke="#555" stroke-width="1.45"/></svg>
<div style="left:397.6px;top:309.1px;width:97px;height:44.9px;background:#bcbcbc;border-radius:6px;filter:blur(0.9px);"></div>
<div style="left:396px;top:307.3px;width:97px;height:44.9px;background:linear-gradient(100deg,#cfd8ee 0%,#e3e8f5 45%,#fdfdff 88%);border:1px solid #a2a2a2;border-radius:6px;box-sizing:border-box;"></div>
<span id="t60" class="t" style="left:402.3px;top:310.94px;font-size:8.7px;line-height:10.7px;color:#111;font-weight:bold;letter-spacing:-0.557px;">Student</span>
<span id="t61" class="t" style="left:402.3px;top:322.70px;font-size:7.8px;line-height:9.8px;color:#3a3a3a;letter-spacing:-0.809px;">Класс</span>
<svg style="left:402.5px;top:335.5px;" width="5.5" height="5" viewBox="0 0 5.5 5"><path d="M0 2.5 H2.6 M2.2 0.5 L5 2.5 L2.2 4.5 Z" fill="#555" stroke="#555" stroke-width="0.7"/></svg>
<span id="t62" class="t" style="left:410.4px;top:332.70px;font-size:7.8px;line-height:9.8px;color:#3a3a3a;letter-spacing:-0.596px;">Employee</span>
<svg style="left:480.7px;top:312.7px;" width="6.5" height="6" viewBox="0 0 6.5 6"><path d="M0.5 0.6 L3.25 2.8 L6 0.6 M0.5 3.3 L3.25 5.5 L6 3.3" fill="none" stroke="#555" stroke-width="1.45"/></svg>
<svg style="left:441.1px;top:352.4px;" width="7" height="6.5" viewBox="0 0 7 6.5"><path d="M3.5 0.5 L6.5 6 H0.5 Z" fill="#fff" stroke="#8a8a8a" stroke-width="0.8"/></svg>
<div style="left:444.1px;top:358.4px;width:1px;height:13.200000000000045px;background:#9a9a9a;"></div>
<div style="left:397.6px;top:373.40000000000003px;width:97px;height:45px;background:#bcbcbc;border-radius:6px;filter:blur(0.9px);"></div>
<div style="left:396px;top:371.6px;width:97px;height:45px;background:linear-gradient(100deg,#cfd8ee 0%,#e3e8f5 45%,#fdfdff 88%);border:1.8px solid #6e6e6e;border-radius:6px;box-sizing:border-box;"></div>
<span id="t63" class="t" style="left:402.3px;top:374.94px;font-size:8.7px;line-height:10.7px;color:#111;font-weight:bold;letter-spacing:-0.445px;">StudentDistant</span>
<span id="t64" class="t" style="left:402.3px;top:386.70px;font-size:7.8px;line-height:9.8px;color:#3a3a3a;letter-spacing:-0.607px;">Sealed Класс</span>
<svg style="left:402.5px;top:399.8px;" width="5.5" height="5" viewBox="0 0 5.5 5"><path d="M0 2.5 H2.6 M2.2 0.5 L5 2.5 L2.2 4.5 Z" fill="#555" stroke="#555" stroke-width="0.7"/></svg>
<span id="t65" class="t" style="left:410.4px;top:397.70px;font-size:7.8px;line-height:9.8px;color:#3a3a3a;letter-spacing:-0.565px;">Student</span>
<svg style="left:480.7px;top:377.0px;" width="6.5" height="6" viewBox="0 0 6.5 6"><path d="M0.5 0.6 L3.25 2.8 L6 0.6 M0.5 3.3 L3.25 5.5 L6 3.3" fill="none" stroke="#555" stroke-width="1.45"/></svg>
<span id="t66" class="t" style="left:636.8px;top:68.94px;font-size:8.7px;line-height:10.7px;color:#fff;letter-spacing:-0.325px;">Обозреватель решений</span>
<svg style="left:989.4px;top:72.4px;" width="4.8" height="2.8" viewBox="0 0 4.8 2.8"><path d="M0 0 H4.8 L2.4 2.7 Z" fill="#dfe4f3"/></svg>
<svg style="left:1000.5px;top:70px;" width="6" height="9" viewBox="0 0 6 9"><path d="M1.6 0.5 H4.4 V4.4 H1.6 Z M0.4 4.6 H5.6 M3 4.6 V8.4" fill="none" stroke="#e6eaf6" stroke-width="0.9"/></svg>
<svg style="left:1011px;top:71px;" width="6" height="6" viewBox="0 0 6 6"><path d="M0 0 L6 6 M6 0 L0 6" stroke="#e6eaf6" stroke-width="1"/></svg>
<svg style="left:638.6px;top:84.80000000000001px;" width="12" height="11" viewBox="0 0 12 11"><rect x="5.6" y="0.5" width="5.4" height="7.6" fill="#e9edf8" stroke="#3a3a3a" stroke-width="0.9"/><path d="M7 2.4 H9.8 M7 4.2 H9.8 M7 6 H9.8" stroke="#3a3a3a" stroke-width="0.8"/><g transform="translate(0,4.6) scale(0.5)"><path d="M9.5 0.2 L13.2 1.7 V10.3 L9.5 11.8 L4.6 7.5 L2.1 9.5 L0.4 8.7 V3.3 L2.1 2.5 L4.6 4.5 Z M9.7 3.9 L6.9 6 L9.7 8.1 Z" fill="#7a3fc4" stroke="#ccd5f0" stroke-width="0.8" fill-rule="evenodd"/></g></svg>
<div style="left:655px;top:82.5px;width:1px;height:14px;background:#a9b4d8;"></div>
<svg style="left:659.5px;top:83.9px;" width="10" height="11" viewBox="0 0 10 11"><circle cx="5.4" cy="6" r="3.8" fill="none" stroke="#3a3a3a" stroke-width="0.9"/><path d="M5.4 3.8 V6.2 H7.2" fill="none" stroke="#3a3a3a" stroke-width="0.8"/><path d="M0.3 0.8 H3.2 L1.75 2.8 Z" fill="#3a3a3a"/></svg>
<svg style="left:674.4px;top:88.60000000000001px;" width="4.2" height="2.6" viewBox="0 0 4.2 2.6"><path d="M0 0 H4.2 L2.1 2.5 Z" fill="#222"/></svg>
<svg style="left:682.5px;top:85.4px;" width="9" height="8" viewBox="0 0 9 8"><path d="M0.6 2.4 H8.2 M6.2 0.6 L8.2 2.4 M8.4 5.6 H0.8 M2.8 7.4 L0.8 5.6" fill="none" stroke="#3a3a3a" stroke-width="0.9"/></svg>
<svg style="left:697px;top:85.4px;" width="8" height="8" viewBox="0 0 8 8"><path d="M0.8 3.8 L4 0.9 L7.2 3.8 M0.8 7.2 L4 4.3 L7.2 7.2" fill="none" stroke="#3a3a3a" stroke-width="1"/></svg>
<svg style="left:710px;top:84.4px;" width="10" height="10" viewBox="0 0 10 10"><rect x="3" y="0.6" width="6.4" height="6.4" rx="0.8" fill="none" stroke="#3a3a3a" stroke-width="0.9"/><rect x="0.6" y="3" width="6.4" height="6.4" rx="0.8" fill="#ccd5f0" stroke="#3a3a3a" stroke-width="0.9"/></svg>
<div style="left:724px;top:82.5px;width:1px;height:14px;background:#a9b4d8;"></div>
<div style="left:729px;top:82px;width:14.6px;height:15.4px;background:#fbe7ae;border:1px solid #e5c365;box-sizing:border-box;"></div>
<svg style="left:731.5px;top:84.9px;" width="10" height="10" viewBox="0 0 10 10"><rect x="0.8" y="0.8" width="2.4" height="2.4" fill="none" stroke="#222" stroke-width="0.9"/><rect x="5.8" y="5.8" width="2.8" height="2.8" rx="0.6" fill="none" stroke="#222" stroke-width="0.9"/><path d="M2 3.4 V7.2 H5.6" fill="none" stroke="#222" stroke-width="0.9"/></svg>
<svg style="left:745.6999999999999px;top:88.60000000000001px;" width="4.2" height="2.6" viewBox="0 0 4.2 2.6"><path d="M0 0 H4.2 L2.1 2.5 Z" fill="#222"/></svg>
<div style="left:752px;top:82.5px;width:1px;height:14px;background:#a9b4d8;"></div>
<svg style="left:758px;top:84.4px;" width="10" height="10" viewBox="0 0 10 10"><path d="M9.2 2.6 Q9.6 4.6 8 5.6 Q6.8 6.2 5.6 5.6 L1.8 9.4 L0.6 8.2 L4.4 4.4 Q3.8 3.2 4.4 2 Q5.4 0.4 7.4 0.8 L5.8 2.6 L7.4 4.2 Z" fill="#2a2a2a"/></svg>
<div style="left:771.4px;top:82px;width:14.6px;height:15.4px;background:#fbe7ae;border:1px solid #e5c365;box-sizing:border-box;"></div>
<svg style="left:774px;top:85.9px;" width="10" height="7" viewBox="0 0 10 7"><path d="M0.6 3.6 H9.4 V6.2 H0.6 Z" fill="#e6c05a" stroke="#6a5520" stroke-width="0.7"/><path d="M2 3.4 L8 1" stroke="#6a5520" stroke-width="0.8" stroke-dasharray="1 0.8"/></svg>
<div style="left:636px;top:98.8px;width:385px;height:15px;background:#fff;border:1px solid #c3cbe6;box-sizing:border-box;"></div>
<span id="t67" class="t" style="left:638.6px;top:102.94px;font-size:8.7px;line-height:10.7px;color:#767676;letter-spacing:-0.262px;">Обозреватель решений — поиск (Ctrl+;)</span>
<svg style="left:1001.8px;top:102.4px;" width="9" height="9" viewBox="0 0 9 9"><circle cx="5.6" cy="3.4" r="2.7" fill="none" stroke="#3a3a3a" stroke-width="1"/><path d="M3.8 5.4 L0.8 8.4" stroke="#3a3a3a" stroke-width="1.3"/></svg>
<div style="left:1012.5px;top:100.6px;width:1px;height:12.2px;background:#d5daec;"></div>
<svg style="left:1014.6px;top:106px;" width="4" height="2.4" viewBox="0 0 4 2.4"><path d="M0 0 H4 L2 2.3 Z" fill="#222"/></svg>
<div style="left:634.5px;top:154.3px;width:387.5px;height:12.6px;background:#e3e6f1;"></div>
<svg style="left:644.6px;top:117.30000000000001px;" width="11" height="10" viewBox="0 0 11 10"><rect x="0.5" y="0.5" width="8.8" height="7" fill="#f4f5fa" stroke="#6a6a6a" stroke-width="0.9"/><rect x="0.5" y="0.5" width="8.8" height="2" fill="#8a8a8a"/><path d="M8.2 4.2 L9.6 4.8 V8.8 L8.2 9.4 L5.2 7 L4.2 7.8 L3.6 7.5 V6.1 L4.2 5.8 L5.2 6.6 Z M8.2 5.8 L6.6 6.8 L8.2 7.8 Z" fill="#7a3fc4" fill-rule="evenodd"/></svg>
<span id="t68" class="t" style="left:659px;top:116.94px;font-size:8.7px;line-height:10.7px;color:#262626;letter-spacing:-0.418px;">Решение "MyClassLibrary"  (1 проекта 1)</span>
<svg style="left:642.6px;top:133.77px;" width="4.4" height="4.4" viewBox="0 0 4.4 4.4"><path d="M4.4 0 V4.4 H0 Z" fill="#222"/></svg>
<svg style="left:657px;top:131.27px;" width="11" height="9" viewBox="0 0 11 9"><rect x="0.5" y="0.5" width="9.8" height="7.8" fill="#e4f1e4" stroke="#5b8a63" stroke-width="0.9"/></svg>
<span id="t69" class="t" style="left:659.3px;top:132.56px;font-size:5.6px;line-height:7.6px;color:#2f8a3c;font-weight:bold;letter-spacing:-0.556px;">C#</span>
<span id="t70" class="t" style="left:671px;top:129.94px;font-size:8.7px;line-height:10.7px;color:#111;font-weight:bold;letter-spacing:-0.669px;">MyClassLibrary</span>
<svg style="left:654.4px;top:145.24px;" width="4" height="7" viewBox="0 0 4 7"><path d="M0.5 0.6 L3.4 3.5 L0.5 6.4 Z" fill="#f7f9fe" stroke="#333" stroke-width="0.8"/></svg>
<svg style="left:668px;top:144.14000000000001px;" width="11" height="10" viewBox="0 0 11 10"><rect x="0.5" y="0.8" width="4" height="3.6" fill="none" stroke="#444" stroke-width="0.8"/><rect x="5.6" y="0.4" width="4.4" height="3.6" fill="none" stroke="#444" stroke-width="0.8"/><rect x="1" y="5" width="3.6" height="3" fill="none" stroke="#444" stroke-width="0.8"/><path d="M7.6 4.4 L10.6 9.6 H4.6 Z" fill="#f0b323" stroke="#b07c10" stroke-width="0.4"/></svg>
<span id="t71" class="t" style="left:682.5px;top:142.94px;font-size:8.7px;line-height:10.7px;color:#262626;letter-spacing:-0.393px;">Зависимости</span>
<svg style="left:668px;top:157.01px;" width="11" height="10" viewBox="0 0 11 10"><rect x="3.8" y="0.5" width="3.2" height="2.6" fill="#444"/><rect x="0.4" y="6.2" width="2.8" height="2.8" fill="#444"/><rect x="4" y="6.2" width="2.8" height="2.8" fill="#444"/><rect x="7.6" y="6.2" width="2.8" height="2.8" fill="#444"/><path d="M5.4 3 V4.6 M1.8 6.2 V4.6 H9 V6.2 M5.4 4.6 V6.2" fill="none" stroke="#444" stroke-width="0.8"/></svg>
<span id="t72" class="t" style="left:682.5px;top:155.94px;font-size:8.7px;line-height:10.7px;color:#262626;letter-spacing:-0.499px;">ClassDiagram1.cd</span>
<svg style="left:654.4px;top:170.98px;" width="4" height="7" viewBox="0 0 4 7"><path d="M0.5 0.6 L3.4 3.5 L0.5 6.4 Z" fill="#f7f9fe" stroke="#333" stroke-width="0.8"/></svg>
<span id="t73" class="t" style="left:668.6px;top:170.54px;font-size:6.8px;line-height:8.8px;color:#2f9a41;font-weight:bold;letter-spacing:1.297px;">C#</span>
<span id="t74" class="t" style="left:682.5px;top:168.94px;font-size:8.7px;line-height:10.7px;color:#262626;letter-spacing:-0.440px;">Discipline.cs</span>
<svg style="left:654.4px;top:183.85px;" width="4" height="7" viewBox="0 0 4 7"><path d="M0.5 0.6 L3.4 3.5 L0.5 6.4 Z" fill="#f7f9fe" stroke="#333" stroke-width="0.8"/></svg>
<span id="t75" class="t" style="left:668.6px;top:183.54px;font-size:6.8px;line-height:8.8px;color:#2f9a41;font-weight:bold;letter-spacing:1.297px;">C#</span>
<span id="t76" class="t" style="left:682.5px;top:181.94px;font-size:8.7px;line-height:10.7px;color:#262626;letter-spacing:-0.623px;">Employee.cs</span>
<svg style="left:654.4px;top:196.72px;" width="4" height="7" viewBox="0 0 4 7"><path d="M0.5 0.6 L3.4 3.5 L0.5 6.4 Z" fill="#f7f9fe" stroke="#333" stroke-width="0.8"/></svg>
<span id="t77" class="t" style="left:668.6px;top:196.54px;font-size:6.8px;line-height:8.8px;color:#2f9a41;font-weight:bold;letter-spacing:1.297px;">C#</span>
<span id="t78" class="t" style="left:682.5px;top:194.94px;font-size:8.7px;line-height:10.7px;color:#262626;letter-spacing:-0.713px;">MyList.cs</span>
<svg style="left:654.4px;top:209.59px;" width="4" height="7" viewBox="0 0 4 7"><path d="M0.5 0.6 L3.4 3.5 L0.5 6.4 Z" fill="#f7f9fe" stroke="#333" stroke-width="0.8"/></svg>
<span id="t79" class="t" style="left:668.6px;top:209.54px;font-size:6.8px;line-height:8.8px;color:#2f9a41;font-weight:bold;letter-spacing:1.297px;">C#</span>
<span id="t80" class="t" style="left:682.5px;top:206.94px;font-size:8.7px;line-height:10.7px;color:#262626;letter-spacing:-0.830px;">Persona.cs</span>
<svg style="left:654.4px;top:222.46px;" width="4" height="7" viewBox="0 0 4 7"><path d="M0.5 0.6 L3.4 3.5 L0.5 6.4 Z" fill="#f7f9fe" stroke="#333" stroke-width="0.8"/></svg>
<span id="t81" class="t" style="left:668.6px;top:221.54px;font-size:6.8px;line-height:8.8px;color:#2f9a41;font-weight:bold;letter-spacing:1.297px;">C#</span>
<span id="t82" class="t" style="left:682.5px;top:219.94px;font-size:8.7px;line-height:10.7px;color:#262626;letter-spacing:-0.616px;">Prepod.cs</span>
<svg style="left:654.4px;top:235.33px;" width="4" height="7" viewBox="0 0 4 7"><path d="M0.5 0.6 L3.4 3.5 L0.5 6.4 Z" fill="#f7f9fe" stroke="#333" stroke-width="0.8"/></svg>
<span id="t83" class="t" style="left:668.6px;top:234.54px;font-size:6.8px;line-height:8.8px;color:#2f9a41;font-weight:bold;letter-spacing:1.297px;">C#</span>
<span id="t84" class="t" style="left:682.5px;top:232.94px;font-size:8.7px;line-height:10.7px;color:#262626;letter-spacing:-0.583px;">ShowInfo.cs</span>
<svg style="left:654.4px;top:248.2px;" width="4" height="7" viewBox="0 0 4 7"><path d="M0.5 0.6 L3.4 3.5 L0.5 6.4 Z" fill="#f7f9fe" stroke="#333" stroke-width="0.8"/></svg>
<span id="t85" class="t" style="left:668.6px;top:247.54px;font-size:6.8px;line-height:8.8px;color:#2f9a41;font-weight:bold;letter-spacing:1.297px;">C#</span>
<span id="t86" class="t" style="left:682.5px;top:245.94px;font-size:8.7px;line-height:10.7px;color:#262626;letter-spacing:-0.562px;">Student.cs</span>
<svg style="left:654.4px;top:261.07000000000005px;" width="4" height="7" viewBox="0 0 4 7"><path d="M0.5 0.6 L3.4 3.5 L0.5 6.4 Z" fill="#f7f9fe" stroke="#333" stroke-width="0.8"/></svg>
<span id="t87" class="t" style="left:668.6px;top:260.54px;font-size:6.8px;line-height:8.8px;color:#2f9a41;font-weight:bold;letter-spacing:1.297px;">C#</span>
<span id="t88" class="t" style="left:682.5px;top:258.94px;font-size:8.7px;line-height:10.7px;color:#262626;letter-spacing:-0.443px;">StudentDistant.cs</span>
<span id="t89" class="t" style="left:639px;top:535.94px;font-size:8.7px;line-height:10.7px;color:#fff;letter-spacing:-0.313px;">Чат GitHub Copilot</span>
<div style="left:710px;top:534.6px;width:97.3px;height:11.8px;background:#f7f9fe;"></div>
<span id="t90" class="t" style="left:713.5px;top:535.94px;font-size:8.7px;line-height:10.7px;color:#262626;letter-spacing:-0.299px;">Обозреватель решений</span>
<span id="t91" class="t" style="left:811px;top:535.94px;font-size:8.7px;line-height:10.7px;color:#fff;letter-spacing:-0.211px;">Изменения Git</span>
</div></body></html>
